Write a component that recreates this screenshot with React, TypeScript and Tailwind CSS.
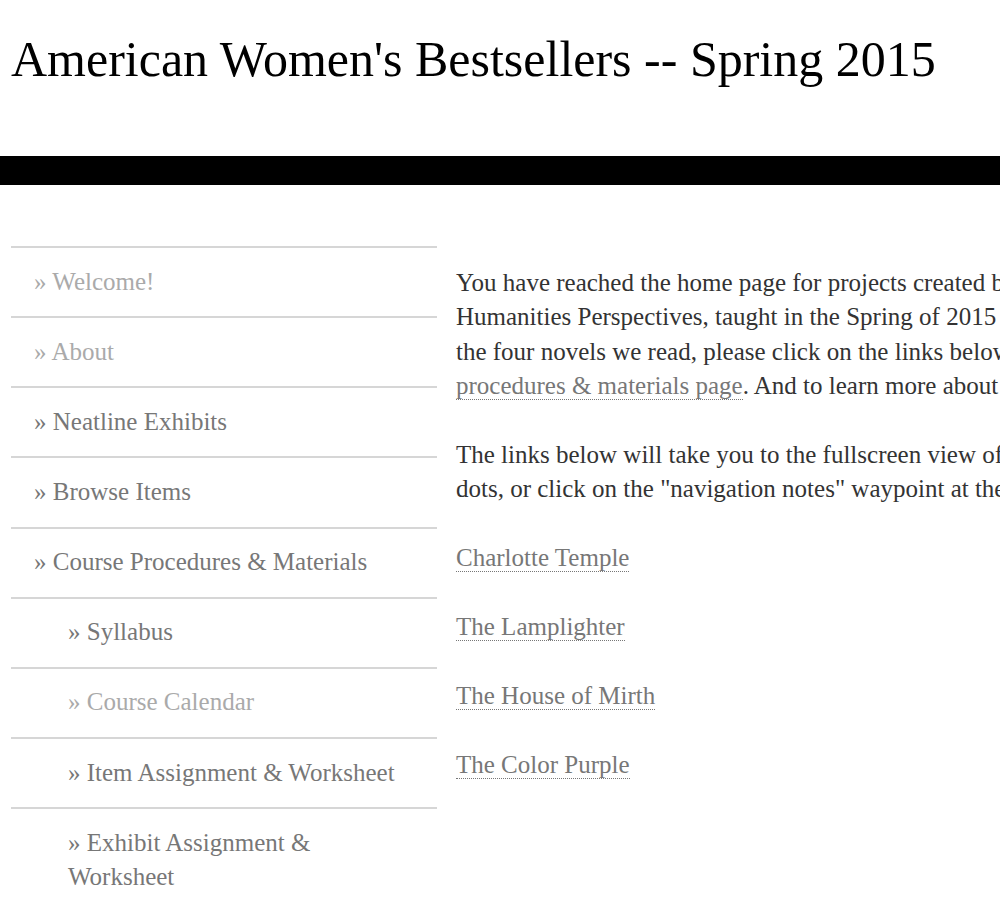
import React from "react";

const navItems: { label: React.ReactNode; key: string; sub?: boolean; light?: boolean }[] = [
  { key: "w", label: "Welcome!", light: true },
  { key: "a", label: "About", light: true },
  { key: "n", label: "Neatline Exhibits" },
  { key: "b", label: "Browse Items" },
  { key: "c", label: "Course Procedures & Materials" },
  { key: "s", label: "Syllabus", sub: true },
  { key: "cc", label: "Course Calendar", sub: true, light: true },
  { key: "i", label: "Item Assignment & Worksheet", sub: true },
  {
    key: "e",
    label: (
      <>
        Exhibit Assignment &amp;
        <br />
        Worksheet
      </>
    ),
    sub: true,
  },
];

const links = ["Charlotte Temple", "The Lamplighter", "The House of Mirth", "The Color Purple"];

function A({ children }: { children: React.ReactNode }) {
  return (
    <a href="#" className="text-[#777] border-b border-dotted border-[#777] no-underline">
      {children}
    </a>
  );
}

export default function App() {
  return (
    <div
      className="w-[1000px] overflow-hidden bg-white"
      style={{ fontFamily: '"Liberation Serif", "Times New Roman", serif' }}
    >
      <header className="pl-[11px] pt-[29px] pb-[67px]">
        <h1 className="text-[50px] leading-[60px] text-black font-normal whitespace-nowrap">
          American Women's Bestsellers -- Spring 2015
        </h1>
      </header>
      <div className="h-[29px] bg-black" />
      <div className="flex pt-[61px] text-[25px] leading-[34.65px]">
        <nav className="ml-[11px] w-[426px] shrink-0">
          <ul>
            {navItems.map((item) => (
              <li key={item.key} className="border-t-2 border-[#d6d6d6] py-[16.74px]">
                <a
                  href="#"
                  className={`block whitespace-nowrap ${item.sub ? "pl-[57px]" : "pl-[23px]"} ${
                    item.light ? "text-[#aaa]" : "text-[#777]"
                  }`}
                >
                  » {item.label}
                </a>
              </li>
            ))}
          </ul>
        </nav>
        <main className="ml-[19px] pt-[19.5px] w-[800px] shrink-0 text-[#333]">
          <p className="mb-[33.6px] whitespace-nowrap">
            You have reached the home page for projects created by the students of
            <br />
            Humanities Perspectives, taught in the Spring of 2015 at the University.
            <br />
            the four novels we read, please click on the links below. To see our
            <br />
            <A>procedures &amp; materials page</A>. And to learn more about our work,
          </p>
          <p className="mb-[33.6px] whitespace-nowrap">
            The links below will take you to the fullscreen view of each exhibit.
            <br />
            dots, or click on the "navigation notes" waypoint at the top of the page.
          </p>
          {links.map((l) => (
            <p key={l} className="mb-[34.35px]">
              <A>{l}</A>
            </p>
          ))}
        </main>
      </div>
    </div>
  );
}
